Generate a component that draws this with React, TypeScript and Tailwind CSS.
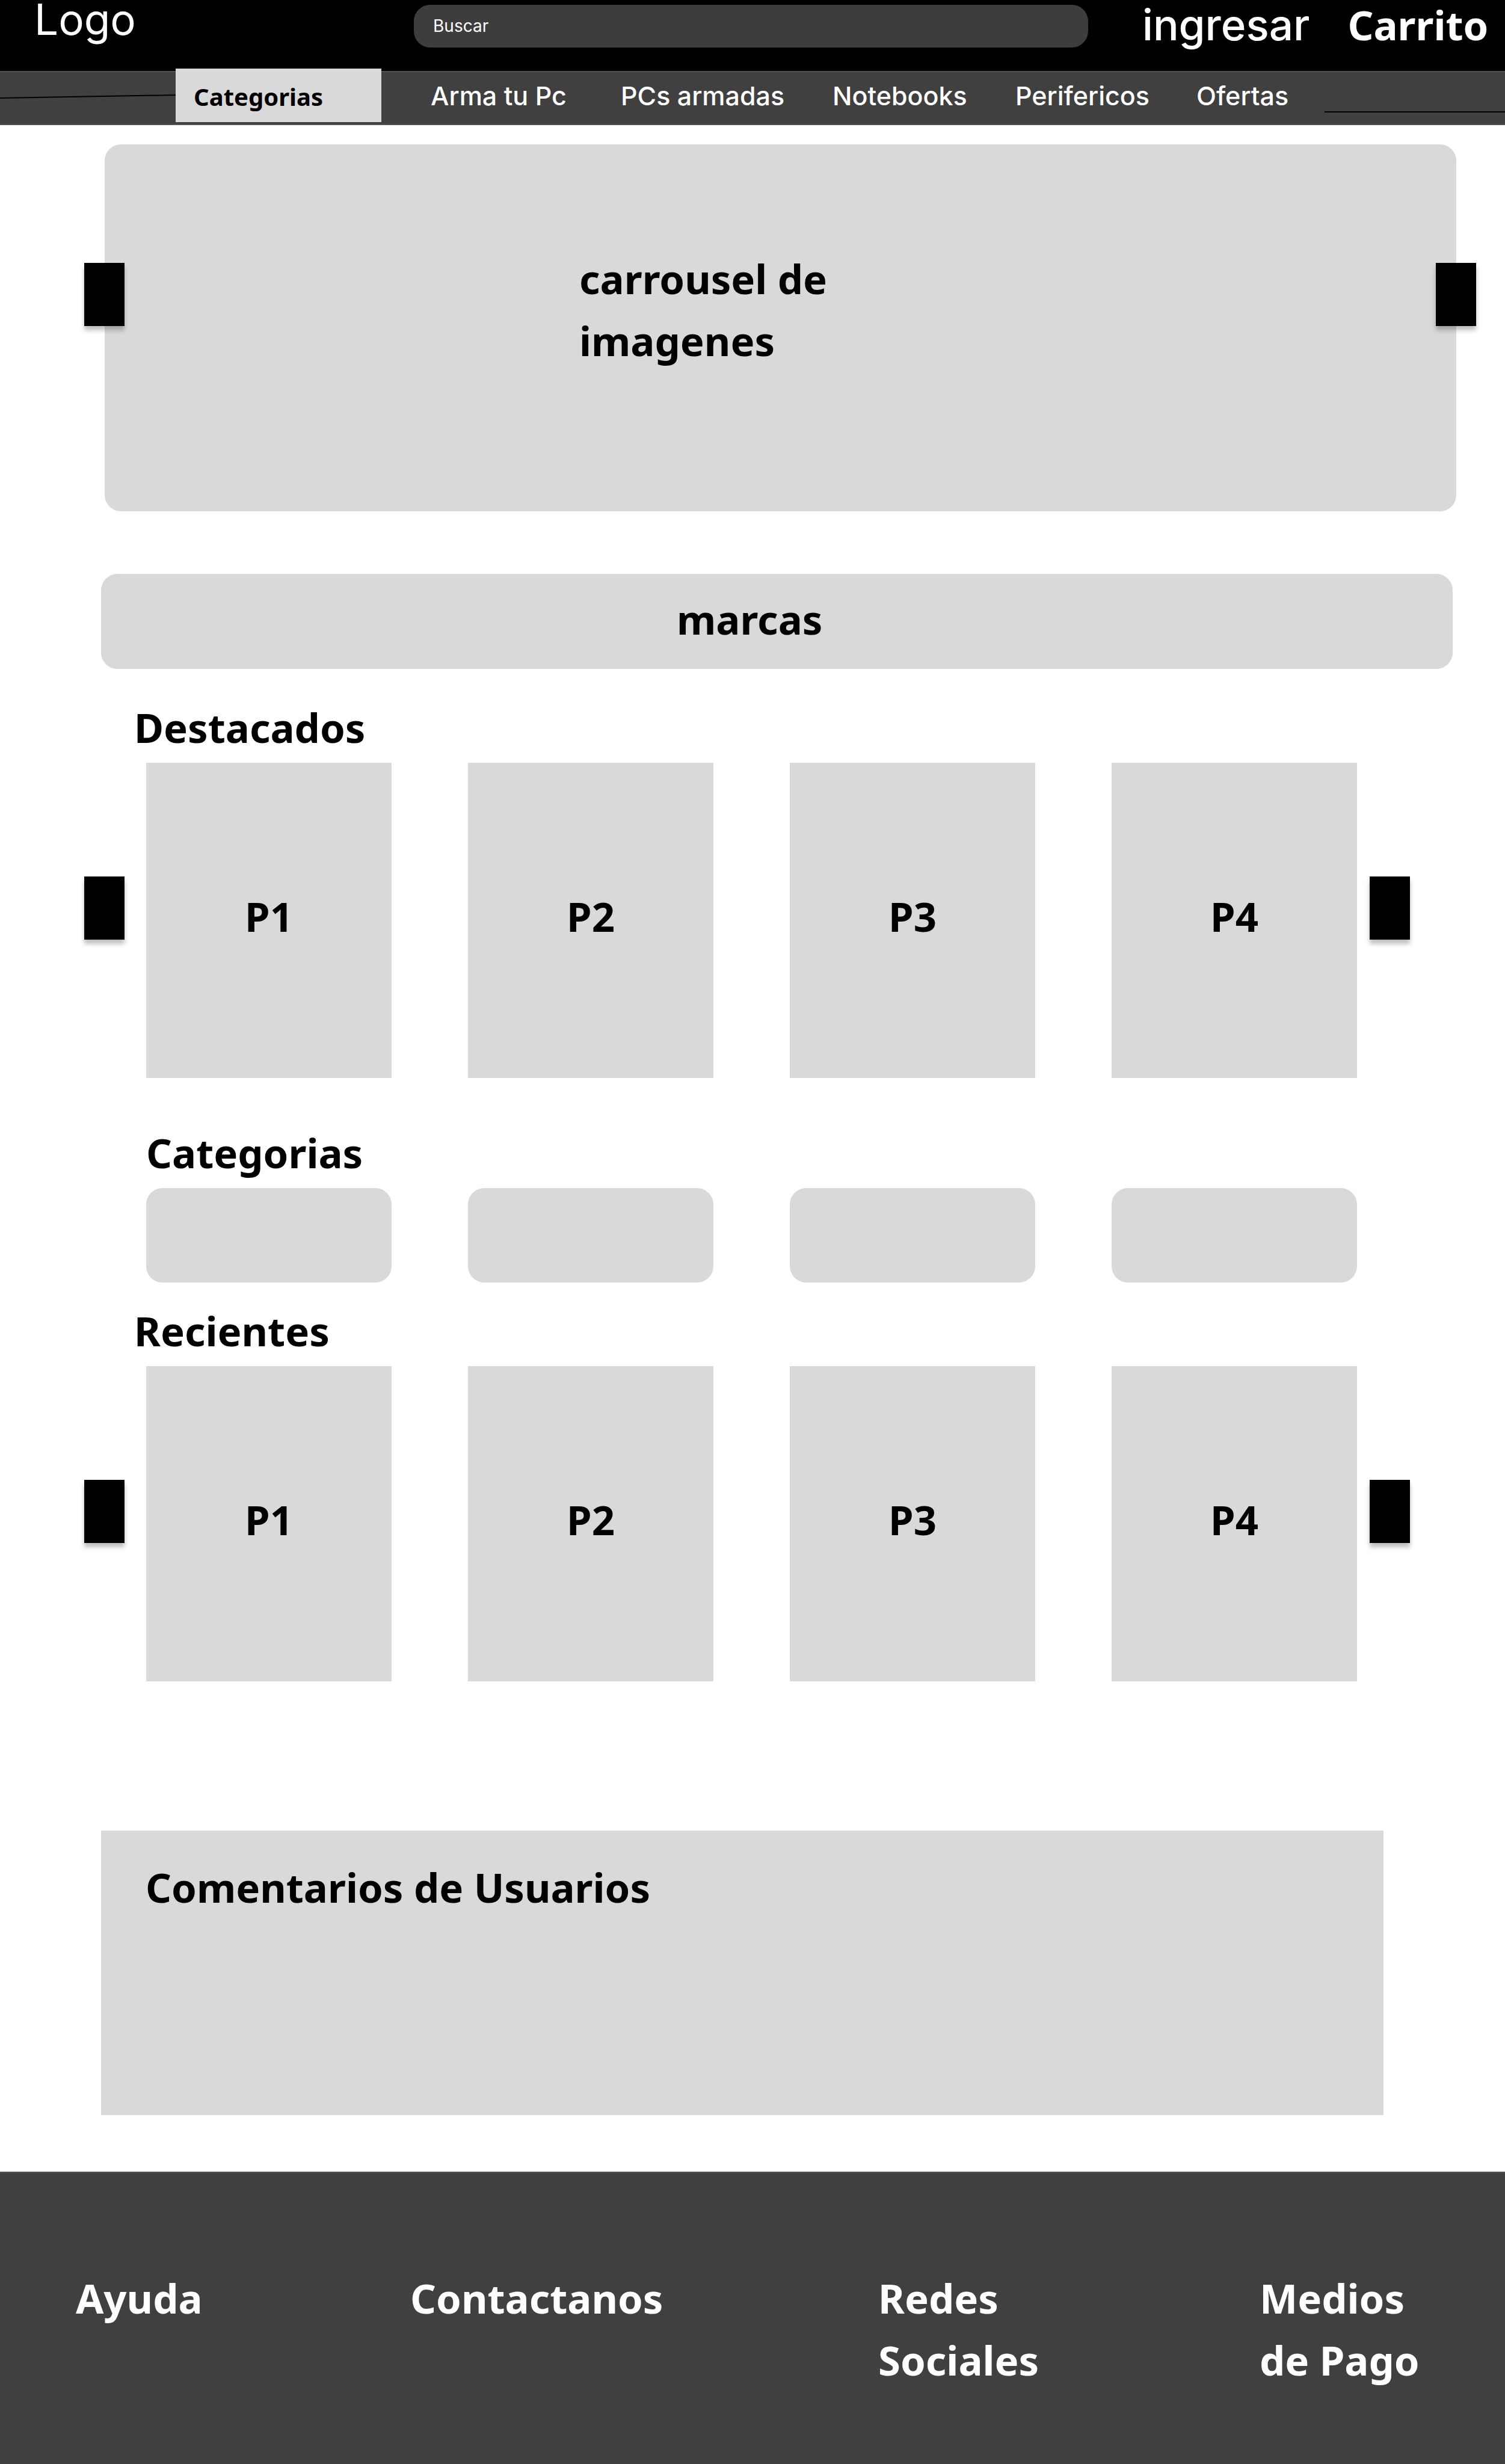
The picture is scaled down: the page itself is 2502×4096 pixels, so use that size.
import React from "react";

const navLinks = ["Arma tu Pc", "PCs armadas", "Notebooks", "Perifericos", "Ofertas"];
const products = ["P1", "P2", "P3", "P4"];
const categories = ["Categoria 1", "Categoria 2", "Categoria 3", "Categoria 4"];

function Arrow({ label, className }: { label: string; className: string }) {
  return (
    <button
      type="button"
      aria-label={label}
      className={`absolute h-[105px] w-[67px] bg-black shadow-[0_7px_7px_rgba(0,0,0,0.25)] ${className}`}
    />
  );
}

function Header() {
  return (
    <header className="grid h-[118px] grid-cols-[688fr_1121fr_693fr] items-start bg-black font-['Inter',sans-serif] text-white">
      <a href="#inicio" className="pl-[57px] text-[71px] leading-[64px] font-normal">
        Logo
      </a>
      <input
        type="search"
        aria-label="Buscar"
        placeholder="Buscar"
        className="mt-2 h-[71px] w-full rounded-[27px] bg-[#3d3d3d] px-8 text-[28px] font-normal text-white placeholder:text-white placeholder:opacity-100"
      />
      <div className="flex gap-[63px] pl-[90px] leading-[82px] whitespace-nowrap">
        <a href="#ingresar" className="text-[71px] font-medium">
          ingresar
        </a>
        <a href="#carrito" className="font-['Noto_Sans',sans-serif] text-[67px] font-bold">
          Carrito
        </a>
      </div>
    </header>
  );
}

function NavBar() {
  return (
    <nav className="grid h-[90px] grid-cols-[292fr_342fr_1568fr_300fr] items-start border-y-2 border-[#525252] bg-[#404040]">
      <svg viewBox="0 0 292 86" preserveAspectRatio="none" className="h-[86px] w-full" aria-hidden="true">
        <line x1="0" y1="43" x2="292" y2="38" stroke="#000" strokeWidth="2" />
      </svg>
      <button
        type="button"
        className="-mt-[6px] h-[89px] bg-[#d9d9d9] pt-1 pl-[30px] text-left text-[40px] leading-none font-bold text-black"
      >
        Categorias
      </button>
      <ul className="grid grid-cols-[316fr_352fr_304fr_301fr_213fr] pl-[82px] font-['Inter',sans-serif] text-[43px] leading-[78px] font-medium whitespace-nowrap text-white">
        {navLinks.map((link) => (
          <li key={link}>
            <a href="#tienda">{link}</a>
          </li>
        ))}
      </ul>
      <div className="mt-[65px] h-[2px] bg-black" />
    </nav>
  );
}

function ProductRow({ title, className }: { title: string; className: string }) {
  return (
    <section className={`pr-[246px] pl-[223px] ${className}`}>
      <h2>{title}</h2>
      <div className="relative mt-[7px] ml-5">
        <Arrow label={`${title}: anterior`} className="top-[189px] -left-[103px]" />
        <ul className="grid grid-cols-4 gap-[127px]">
          {products.map((product) => (
            <li key={product} className="flex h-[524px] items-center justify-center bg-[#d9d9d9] pb-[14px]">
              {product}
            </li>
          ))}
        </ul>
        <Arrow label={`${title}: siguiente`} className="top-[189px] -right-[88px]" />
      </div>
    </section>
  );
}

export default function App() {
  return (
    <div className="min-h-screen bg-white font-['Noto_Sans',sans-serif] text-[67px] leading-[103px] font-bold text-black">
      <Header />
      <NavBar />
      <main>
        <section className="relative mt-8 mr-[81px] ml-[174px] grid grid-cols-[789fr_1458fr] rounded-[27px] bg-[#d9d9d9] pt-[172px] pb-[232px]">
          <Arrow label="Imagen anterior" className="top-[197px] -left-[34px]" />
          <p className="col-start-2 max-w-[480px]">carrousel de imagenes</p>
          <Arrow label="Imagen siguiente" className="top-[197px] -right-[33px]" />
        </section>

        <section className="mt-[104px] mr-[87px] ml-[168px] grid h-[158px] grid-cols-[957fr_1290fr] rounded-[27px] bg-[#d9d9d9]">
          <h2 className="col-start-2 leading-[150px]">marcas</h2>
        </section>

        <ProductRow title="Destacados" className="mt-[46px]" />

        <section className="mt-[73px] pr-[246px] pl-[243px]">
          <h2>Categorias</h2>
          <div className="mt-[7px] grid grid-cols-4 gap-[127px]">
            {categories.map((category) => (
              <a
                key={category}
                href="#categorias"
                aria-label={category}
                className="h-[157px] rounded-[27px] bg-[#d9d9d9]"
              />
            ))}
          </div>
        </section>

        <ProductRow title="Recientes" className="mt-[29px]" />

        <section className="mt-[248px] mr-[202px] ml-[168px] h-[473px] bg-[#d9d9d9] pt-[43px] pl-[74px]">
          <h2>Comentarios de Usuarios</h2>
        </section>
      </main>

      <footer className="mt-[94px] grid grid-cols-[556fr_778fr_634fr_408fr] border-t-2 border-[#525252] bg-[#404040] pt-[157px] pb-[121px] pl-[126px] text-white">
        <a href="#ayuda">Ayuda</a>
        <a href="#contacto">Contactanos</a>
        <a href="#redes" className="max-w-[300px]">
          Redes Sociales
        </a>
        <a href="#pagos" className="max-w-[300px]">
          Medios de Pago
        </a>
      </footer>
    </div>
  );
}
